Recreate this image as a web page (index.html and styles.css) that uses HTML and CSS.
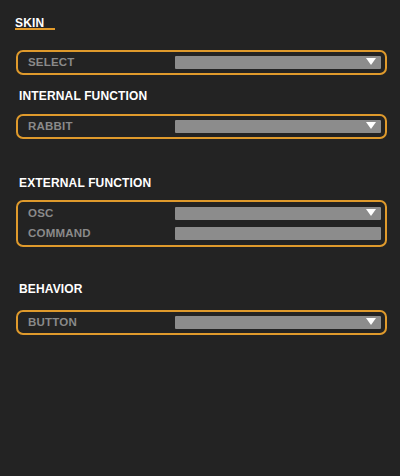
FILE: index.html
```html
<!DOCTYPE html>
<html>
<head>
<meta charset="utf-8">
<link rel="stylesheet" href="styles.css">
</head>
<body>
<div class="panel">
  <div class="skin-title">SKIN</div>

  <div class="box box-first">
    <div class="row">
      <span class="label">SELECT</span>
      <div class="bar"><svg class="arrow" width="10" height="7" viewBox="0 0 10 7"><polygon points="0,0 10,0 5,7" fill="#fff"/></svg></div>
    </div>
  </div>

  <div class="heading h-internal">INTERNAL FUNCTION</div>
  <div class="box">
    <div class="row">
      <span class="label">RABBIT</span>
      <div class="bar"><svg class="arrow" width="10" height="7" viewBox="0 0 10 7"><polygon points="0,0 10,0 5,7" fill="#fff"/></svg></div>
    </div>
  </div>

  <div class="heading h-external">EXTERNAL FUNCTION</div>
  <div class="box box-multi">
    <div class="row">
      <span class="label">OSC</span>
      <div class="bar"><svg class="arrow" width="10" height="7" viewBox="0 0 10 7"><polygon points="0,0 10,0 5,7" fill="#fff"/></svg></div>
    </div>
    <div class="row">
      <span class="label">COMMAND</span>
      <div class="bar"></div>
    </div>
  </div>

  <div class="heading h-behavior">BEHAVIOR</div>
  <div class="box">
    <div class="row">
      <span class="label">BUTTON</span>
      <div class="bar"><svg class="arrow" width="10" height="7" viewBox="0 0 10 7"><polygon points="0,0 10,0 5,7" fill="#fff"/></svg></div>
    </div>
  </div>
</div>
</body>
</html>
```
FILE: styles.css
```css
html, body {
  margin: 0;
  padding: 0;
  background: #232323;
  height: 100%;
}
body {
  font-family: "Liberation Sans", Arial, sans-serif;
  font-weight: bold;
}
.panel {
  padding: 18px 13px 0 16px;
  display: flex;
  flex-direction: column;
}
.skin-title {
  color: #fff;
  font-size: 12px;
  line-height: 10px;
  width: 40px;
  margin-left: -1px;
  letter-spacing: 0.2px;
  border-bottom: 2px solid #e39b2a;
}
.box {
  border: 2px solid #df9a2c;
  border-radius: 7px;
  padding: 4px 4px 4px 10px;
  display: flex;
  flex-direction: column;
}
.box-first { margin-top: 20px; }
.box-multi {
  padding-top: 5px;
  padding-bottom: 5px;
  gap: 7px;
}
.row {
  display: flex;
  align-items: center;
  height: 13px;
}
.label {
  color: #8a8a8a;
  font-size: 11.5px;
  line-height: 13px;
  letter-spacing: 0.2px;
  width: 147px;
  flex: none;
}
.bar {
  flex: 1;
  height: 13px;
  background: #8c8c8c;
  border-radius: 1px;
  display: flex;
  justify-content: flex-end;
  align-items: flex-start;
  padding-right: 5px;
}
.arrow {
  margin-top: 2px;
  display: block;
}
.heading {
  color: #fff;
  font-size: 12px;
  line-height: 14px;
  letter-spacing: 0.15px;
  margin-left: 3px;
}
.h-internal { margin-top: 14px; margin-bottom: 11px; }
.h-external { margin-top: 37px; margin-bottom: 10px; }
.h-behavior { margin-top: 35px; margin-bottom: 14px; }
```
